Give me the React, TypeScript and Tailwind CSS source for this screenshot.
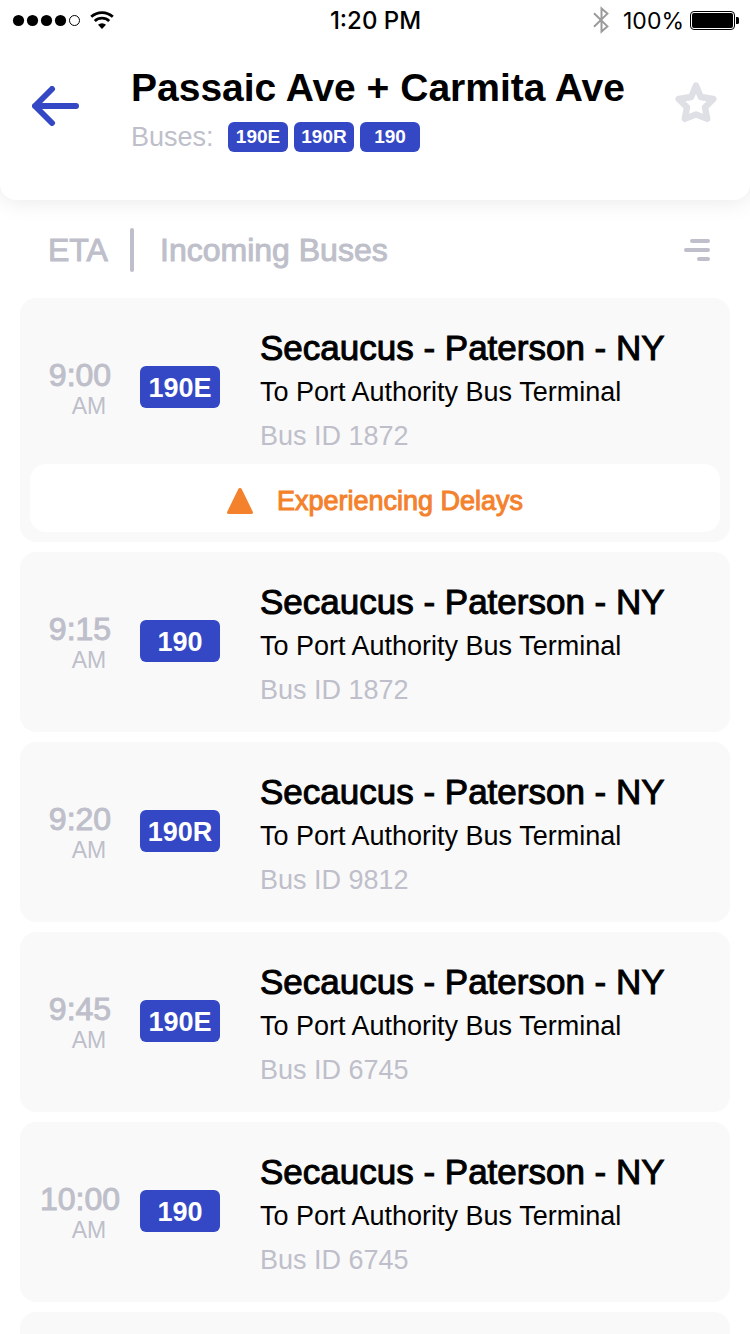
import { clsx } from "clsx";

const TEXT = {
  stop: "Passaic Ave + Carmita Ave",
  buses: "Buses:",
  eta: "ETA",
  incoming: "Incoming Buses",
  delays: "Experiencing Delays",
  back: "Back",
  favorite: "Add to favorites",
  sort: "Sort buses"
};

const ROUTES = ["190E", "190R", "190"];

type Arrival = {
  time: string;
  period: string;
  route: string;
  title: string;
  destination: string;
  busId: string;
  delayed?: boolean;
};

const LINE = {
  period: "AM",
  title: "Secaucus - Paterson - NY",
  destination: "To Port Authority Bus Terminal"
};

const ARRIVALS: Arrival[] = [
  { ...LINE, time: "9:00", route: "190E", busId: "1872", delayed: true },
  { ...LINE, time: "9:15", route: "190", busId: "1872" },
  { ...LINE, time: "9:20", route: "190R", busId: "9812" },
  { ...LINE, time: "9:45", route: "190E", busId: "6745" },
  { ...LINE, time: "10:00", route: "190", busId: "6745" }
];

const StatusBar = () => (
  <div className="grid h-10 grid-cols-3 items-center pr-[11px] pl-3 font-['Inter',sans-serif] text-[23px] leading-7 text-black">
    <div className="flex items-center gap-2">
      <svg width="70" height="14" viewBox="0 0 70 14" aria-hidden="true">
        <circle cx="6.5" cy="7.5" r="5.6" />
        <circle cx="20.5" cy="7.5" r="5.6" />
        <circle cx="34.5" cy="7.5" r="5.6" />
        <circle cx="48.5" cy="7.5" r="5.6" />
        <circle cx="62.5" cy="7.5" r="5" fill="none" stroke="currentColor" />
      </svg>
      <svg width="24" height="18" viewBox="0 0 24 18" fill="none" stroke="currentColor" strokeWidth="2.8" aria-hidden="true">
        <path d="M1.2 5.8a16 16 0 0 1 21.6 0" />
        <path d="M4.8 10a10.5 10.5 0 0 1 14.4 0" />
        <path d="M8 13.8a5.8 5.8 0 0 1 8 0L12 18z" fill="currentColor" stroke="none" />
      </svg>
    </div>
    <time className="pt-[2px] text-center text-[24px] font-medium">1:20 PM</time>
    <div className="flex items-center justify-end gap-[6px]">
      <svg className="mr-2" width="16" height="28" viewBox="0 0 16 28" fill="none" stroke="#9b9b9b" strokeWidth="2" aria-hidden="true">
        <path d="M1 7.2 14.4 20.4 8.5 25.6V2.4l5.9 5.2L1 20.8" />
      </svg>
      <span className="pt-[2px]">100%</span>
      <svg width="49" height="19" viewBox="0 0 49 19" aria-hidden="true">
        <rect x="0.5" y="0.5" width="44" height="18" rx="3.5" fill="none" stroke="currentColor" />
        <rect x="2" y="2" width="41" height="15" rx="2" />
        <path d="M46 6h1.5a1.5 1.5 0 0 1 1.5 1.5v4a1.5 1.5 0 0 1-1.5 1.5H46z" />
      </svg>
    </div>
  </div>
);

const Header = () => (
  <header className="rounded-b-2xl bg-white pb-12 shadow-[0_0_24px_rgba(0,0,0,0.1)]">
    <StatusBar />
    <div className="flex items-start px-8 pt-[26px]">
      <button type="button" aria-label={TEXT.back} className="mt-5">
        <svg width="48" height="40" viewBox="0 0 48 40" fill="none" stroke="#3448c5" strokeWidth="6" strokeLinecap="round" strokeLinejoin="round">
          <path d="M44 20H3M20 3 3 20l17 17" />
        </svg>
      </button>
      <div className="ml-[51px] flex-1">
        <h1 className="text-[39px] leading-11 font-bold whitespace-nowrap text-black">{TEXT.stop}</h1>
        <div className="mt-3 flex items-center">
          <span className="w-[97px] text-[27px] leading-[30px] text-[#bebfca]">{TEXT.buses}</span>
          <ul className="flex gap-[6px]">
            {ROUTES.map((route) => (
              <li
                key={route}
                className="flex h-[30px] w-[60px] items-center justify-center rounded-md bg-[#3448c5] text-[19px] font-bold text-white"
              >
                {route}
              </li>
            ))}
          </ul>
        </div>
      </div>
      <button type="button" aria-label={TEXT.favorite} className="mt-4">
        <svg width="44" height="42" viewBox="0 0 44 42" fill="none" stroke="#dfe0e6" strokeWidth="6.4" strokeLinejoin="round">
          <path d="M22 3.5 26.8 15 39.4 17 31 25.3 33.2 36.9 22 32.4 10.8 36.9 13 25.3 4.6 17 17.2 15z" />
        </svg>
      </button>
    </div>
  </header>
);

const ArrivalCard = ({ arrival }: { arrival: Arrival }) => (
  <li className="rounded-2xl bg-[#f9f9f9]">
    <div className={clsx("flex items-start pt-7", arrival.delayed ? "pb-[6px]" : "pb-5")}>
      <div className="mt-[31px] w-[120px] text-center text-[#bebfca]">
        <p className="text-[32px] leading-9 [-webkit-text-stroke:1px]">{arrival.time}</p>
        <p className="pl-[18px] text-[23px] leading-[26px]">{arrival.period}</p>
      </div>
      <span className="mt-10 mr-10 flex h-[42px] w-20 items-center justify-center rounded-md bg-[#3448c5] pt-[2px] text-[27px] font-bold text-white">
        {arrival.route}
      </span>
      <div className="text-[27px] leading-11 text-black">
        <h2 className="text-[35px] leading-11 [-webkit-text-stroke:1px]">{arrival.title}</h2>
        <p>{arrival.destination}</p>
        <p className="text-[#bebfca]">Bus ID {arrival.busId}</p>
      </div>
    </div>
    {arrival.delayed && (
      <div className="px-[10px] pb-[10px]">
        <p className="flex h-[68px] items-center justify-center gap-6 rounded-2xl bg-white pt-[6px] text-[27px] text-[#f4812c] [-webkit-text-stroke:1px]">
          <svg width="26" height="26" viewBox="0 0 26 26" fill="currentColor" aria-hidden="true">
            <path d="M11.2 1.2a2 2 0 0 1 3.6 0l11 22.6a1.5 1.5 0 0 1-1.4 2.2H1.6a1.5 1.5 0 0 1-1.4-2.2z" />
          </svg>
          {TEXT.delays}
        </p>
      </div>
    )}
  </li>
);

export default function App() {
  return (
    <div className="flex h-screen flex-col overflow-hidden bg-white font-['Liberation_Sans',Arial,sans-serif]">
      <Header />
      <main className="flex-1 overflow-y-auto px-5 [scrollbar-width:none]">
        <div className="flex items-center pt-7 pr-5 pb-[26px] pl-7 text-[32px] leading-11 text-[#bebfca] [-webkit-text-stroke:1px]">
          <span className="w-[82px]">{TEXT.eta}</span>
          <span className="h-11 w-1 rounded-full bg-[#bebfca]" />
          <h2 className="ml-[26px] flex-1">{TEXT.incoming}</h2>
          <button type="button" aria-label={TEXT.sort}>
            <svg width="26" height="22" viewBox="0 0 26 22" fill="none" stroke="currentColor" strokeWidth="4" strokeLinecap="round">
              <path d="M8 2h16M2 11h22M15 20h9" />
            </svg>
          </button>
        </div>
        <ul className="flex flex-col gap-[10px]">
          {ARRIVALS.map((arrival) => (
            <ArrivalCard key={arrival.time} arrival={arrival} />
          ))}
          <li className="h-[180px] rounded-2xl bg-[#f9f9f9]" aria-hidden="true" />
        </ul>
      </main>
    </div>
  );
}
